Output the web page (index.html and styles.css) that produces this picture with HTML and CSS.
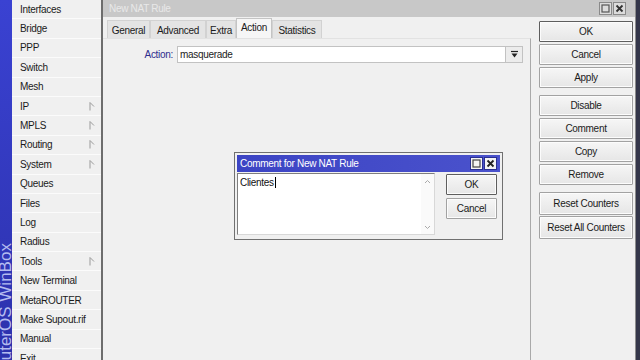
FILE: index.html
```html
<!DOCTYPE html>
<html lang="en">

<head>
    <meta charset="UTF-8">
    <title>New NAT Rule</title>
    <link rel="stylesheet" href="styles.css">
</head>

<body>
    <div class="strip">
        <span class="strip-text">RouterOS WinBox</span>
    </div>

    <div class="menu">
        <div class="menu-item">Interfaces</div>
        <div class="menu-item">Bridge</div>
        <div class="menu-item">PPP</div>
        <div class="menu-item">Switch</div>
        <div class="menu-item">Mesh</div>
        <div class="menu-item">IP <svg class="sub" width="6" height="9" viewBox="0 0 6 9"><path d="M1 0.5V8.5M1 0.5L5 4.5" /></svg></div>
        <div class="menu-item">MPLS <svg class="sub" width="6" height="9" viewBox="0 0 6 9"><path d="M1 0.5V8.5M1 0.5L5 4.5" /></svg></div>
        <div class="menu-item">Routing <svg class="sub" width="6" height="9" viewBox="0 0 6 9"><path d="M1 0.5V8.5M1 0.5L5 4.5" /></svg></div>
        <div class="menu-item">System <svg class="sub" width="6" height="9" viewBox="0 0 6 9"><path d="M1 0.5V8.5M1 0.5L5 4.5" /></svg></div>
        <div class="menu-item">Queues</div>
        <div class="menu-item">Files</div>
        <div class="menu-item">Log</div>
        <div class="menu-item">Radius</div>
        <div class="menu-item">Tools <svg class="sub" width="6" height="9" viewBox="0 0 6 9"><path d="M1 0.5V8.5M1 0.5L5 4.5" /></svg></div>
        <div class="menu-item">New Terminal</div>
        <div class="menu-item">MetaROUTER</div>
        <div class="menu-item">Make Supout.rif</div>
        <div class="menu-item">Manual</div>
        <div class="menu-item">Exit</div>
    </div>

    <div class="win">
        <div class="titlebar">
            <span>New NAT Rule</span>
            <div class="title-btns">
                <span class="tbtn"><svg width="9" height="9" viewBox="0 0 9 9"><rect x="1" y="1" width="7" height="7" fill="none" stroke="#555" stroke-width="1.2" /></svg></span>
                <span class="tbtn"><svg width="9" height="9" viewBox="0 0 9 9"><path d="M1.5 1.5L7.5 7.5M7.5 1.5L1.5 7.5" stroke="#333" stroke-width="1.8" /></svg></span>
            </div>
        </div>

        <div class="win-body">
            <div class="main">
                <div class="tabs">
                    <div class="tab tab-general">General</div>
                    <div class="tab tab-advanced">Advanced</div>
                    <div class="tab tab-extra">Extra</div>
                    <div class="tab tab-action active">Action</div>
                    <div class="tab tab-stats">Statistics</div>
                </div>
                <div class="panel">
                    <div class="field">
                        <label class="field-label">Action:</label>
                        <div class="field-input">masquerade</div>
                        <div class="field-drop">
                            <svg width="9" height="9" viewBox="0 0 9 9"><path d="M1 1.5H8" stroke="#222" stroke-width="1.2" /><path d="M1.5 3.5H7.5L4.5 7.5Z" fill="#222" /></svg>
                        </div>
                    </div>
                </div>
            </div>

            <div class="side">
                <div class="btn default">OK</div>
                <div class="btn">Cancel</div>
                <div class="btn">Apply</div>
                <div class="btn group">Disable</div>
                <div class="btn">Comment</div>
                <div class="btn">Copy</div>
                <div class="btn">Remove</div>
                <div class="btn group tall">Reset Counters</div>
                <div class="btn tall">Reset All Counters</div>
            </div>
        </div>
    </div>

    <div class="dialog">
        <div class="dialog-title">
            <span>Comment for New NAT Rule</span>
            <div class="title-btns">
                <span class="tbtn light"><svg width="9" height="9" viewBox="0 0 9 9"><rect x="1" y="1" width="7" height="7" fill="none" stroke="#444" stroke-width="1.2" /></svg></span>
                <span class="tbtn light"><svg width="9" height="9" viewBox="0 0 9 9"><path d="M1.5 1.5L7.5 7.5M7.5 1.5L1.5 7.5" stroke="#222" stroke-width="1.8" /></svg></span>
            </div>
        </div>
        <div class="dialog-body">
            <div class="memo">
                <div class="memo-text">Clientes<span class="caret"></span></div>
                <div class="memo-scroll">
                    <svg width="7" height="5" viewBox="0 0 7 5"><path d="M1 4L3.5 1.5L6 4" fill="none" stroke="#aaa" /></svg>
                    <svg width="7" height="5" viewBox="0 0 7 5"><path d="M1 1L3.5 3.5L6 1" fill="none" stroke="#aaa" /></svg>
                </div>
            </div>
            <div class="dialog-btns">
                <div class="btn default">OK</div>
                <div class="btn">Cancel</div>
            </div>
        </div>
    </div>
</body>

</html>
```

FILE: styles.css
```css
body {
    margin: 0;
    width: 640px;
    height: 360px;
    overflow: hidden;
    display: flex;
    position: relative;
    background-color: #34364a;
    color: #1b1b1b;
    font-family: "Liberation Sans", Arial, sans-serif;
    font-size: 10px;
    letter-spacing: -0.3px;
}

/* blue brand strip on the far left */
.strip {
    width: 12px;
    flex: none;
    position: relative;
    overflow: hidden;
    background: linear-gradient(#3a42d2, #2c31ac);
}

.strip-text {
    position: absolute;
    left: -3px;
    top: 382px;
    transform-origin: 0 0;
    transform: rotate(-90deg);
    font-size: 17px;
    line-height: 17px;
    letter-spacing: 0;
    white-space: nowrap;
    color: #b4bbf0;
}

/* side menu */
.menu {
    width: 89px;
    flex: none;
    margin-top: -1px;
    background-color: #f0f0f0;
}

.menu-item {
    height: 19.4px;
    box-sizing: border-box;
    display: flex;
    align-items: center;
    justify-content: space-between;
    padding: 0 6px 0 8px;
    border-top: 1px solid #fbfbfb;
}

.sub path {
    fill: none;
    stroke: #9a9a9a;
    stroke-width: 1;
}

/* main window */
.win {
    width: 535px;
    flex: none;
    box-sizing: border-box;
    display: flex;
    flex-direction: column;
    background-color: #f0f0f0;
    border-left: 2px solid #6d6d6d;
    border-right: 1px solid #8c8c8c;
}

.titlebar {
    height: 17px;
    flex: none;
    display: flex;
    align-items: center;
    justify-content: space-between;
    padding: 0 9px 0 6px;
    background-color: #c8c8c8;
    color: #e8e8e8;
}

.title-btns {
    display: flex;
    gap: 1px;
}

.tbtn {
    width: 11px;
    height: 11px;
    display: flex;
    align-items: center;
    justify-content: center;
    background-color: #dcdcdc;
    border: 1px solid #8a8a8a;
}

.tbtn.light {
    background-color: #f4f4f4;
    border-color: #2a2f90;
}

.win-body {
    flex: 1;
    display: flex;
}

.main {
    width: 428px;
    display: flex;
    flex-direction: column;
    padding-top: 2px;
}

.tabs {
    display: flex;
    align-items: flex-end;
    height: 19px;
    padding-left: 4px;
}

.tab {
    height: 18px;
    box-sizing: border-box;
    display: flex;
    align-items: center;
    justify-content: center;
    padding-top: 1px;
    border: 1px solid #d2d2d2;
    border-bottom: none;
    background-color: #e4e4e4;
}

.tab.active {
    height: 20px;
    padding: 0 0 3px;
    background-color: #f6f6f6;
    border-color: #c4c4c4;
}

.tab-general { width: 43px; }
.tab-advanced { width: 56px; }
.tab-extra { width: 30px; }
.tab-action { width: 36px; }
.tab-stats { width: 50px; }

.panel {
    flex: 1;
    border-top: 1px solid #e2e2e2;
    border-right: 1px solid #a9a9a9;
    padding-top: 7px;
}

.field {
    display: flex;
    align-items: center;
    height: 17px;
}

.field-label {
    width: 70px;
    text-align: right;
    padding-right: 4px;
    color: #2e2e8e;
}

.field-input {
    width: 329px;
    height: 17px;
    box-sizing: border-box;
    display: flex;
    align-items: center;
    padding-left: 2px;
    background-color: #ffffff;
    border: 1px solid #c2c2c2;
}

.field-drop {
    width: 17px;
    height: 17px;
    box-sizing: border-box;
    display: flex;
    align-items: center;
    justify-content: center;
    background-color: #ececec;
    border: 1px solid #c2c2c2;
    border-left: none;
}

/* buttons on the right */
.side {
    flex: 1;
    display: flex;
    flex-direction: column;
    gap: 2px;
    padding: 4px 2px 0 8px;
}

.btn {
    height: 21px;
    box-sizing: border-box;
    display: flex;
    align-items: center;
    justify-content: center;
    border: 1px solid #a2a2a2;
    border-radius: 1px;
    background: linear-gradient(#f6f6f6, #e6e6e6);
    box-shadow: inset 0 0 0 1px #fcfcfc;
}

.btn.default {
    border-color: #5e5e5e;
}

.btn.group {
    margin-top: 5px;
}

.btn.tall {
    height: 23px;
    margin-bottom: -1px;
}

/* comment dialog */
.dialog {
    position: absolute;
    left: 234px;
    top: 152px;
    width: 269px;
    height: 88px;
    box-sizing: border-box;
    padding: 2px;
    background-color: #f0f0f0;
    border: 1px solid #707070;
}

.dialog-title {
    height: 17px;
    display: flex;
    align-items: center;
    justify-content: space-between;
    padding: 0 3px 0 3px;
    background: linear-gradient(90deg, #3c44c4, #4a52cc);
    color: #ffffff;
}

.dialog-body {
    display: flex;
    padding-top: 1px;
}

.memo {
    width: 198px;
    height: 62px;
    box-sizing: border-box;
    display: flex;
    background-color: #ffffff;
    border: 1px solid #7e7e7e;
    border-right-color: #d8d8d8;
    border-bottom-color: #d8d8d8;
}

.memo-text {
    flex: 1;
    padding: 3px 0 0 2px;
    color: #111111;
}

.caret {
    display: inline-block;
    width: 1px;
    height: 11px;
    margin-left: 1px;
    vertical-align: -2px;
    background-color: #000000;
}

.memo-scroll {
    width: 13px;
    display: flex;
    flex-direction: column;
    justify-content: space-between;
    align-items: center;
    padding: 5px 0 4px;
    background-color: #fafafa;
}

.dialog-btns {
    width: 51px;
    display: flex;
    flex-direction: column;
    gap: 3px;
    margin: 1px 0 0 11px;
}
```
